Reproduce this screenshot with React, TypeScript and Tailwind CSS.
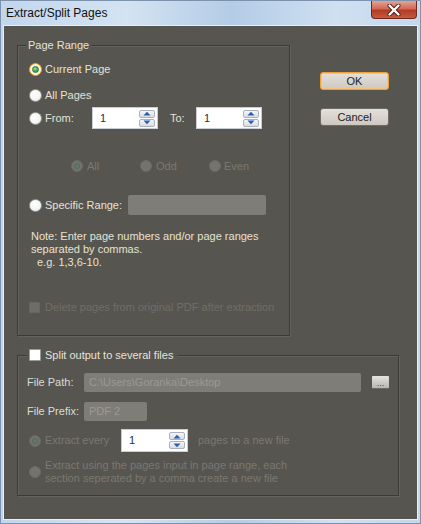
import React from "react";

const FONT = { fontFamily: '"Liberation Sans", Arial, sans-serif' };

type RState = "off" | "focusOn" | "disOn" | "disOff";

function Radio({ state }: { state: RState }) {
  if (state === "off") {
    return (
      <div className="w-[13px] h-[13px] rounded-full border border-[#9a9a96] bg-[radial-gradient(circle_at_40%_35%,#ffffff_0%,#f4f4f2_60%,#dcdcd8_100%)] shrink-0" />
    );
  }
  if (state === "focusOn") {
    return (
      <div className="w-[13px] h-[13px] rounded-full border-[1.5px] border-[#eb9b2a] bg-[#f7f3ea] flex items-center justify-center shrink-0">
        <div className="w-[7px] h-[7px] rounded-full border border-[#2f7a3c] bg-[radial-gradient(circle_at_40%_35%,#9be29a_0%,#45a854_55%,#2c7d39_100%)]" />
      </div>
    );
  }
  if (state === "disOn") {
    return (
      <div className="w-[12px] h-[12px] rounded-full bg-[#74726c] border border-[#6a6863] flex items-center justify-center shrink-0">
        <div className="w-[6px] h-[6px] rounded-full bg-[#5f7c62] border border-[#54695a]" />
      </div>
    );
  }
  return <div className="w-[12px] h-[12px] rounded-full bg-[#75736d] border border-[#6c6a65] shrink-0" />;
}

function Arrow({ up }: { up: boolean }) {
  return (
    <svg width="8" height="5" viewBox="0 0 8 5">
      {up ? (
        <polygon points="0.5,4.5 4,0.8 7.5,4.5" fill="#2d5fb0" />
      ) : (
        <polygon points="0.5,0.5 4,4.2 7.5,0.5" fill="#2d5fb0" />
      )}
    </svg>
  );
}

function Spinner({ w, h }: { w: string; h: string }) {
  return (
    <div className={`${w} ${h} bg-white border border-[#c9ced6] flex items-center justify-between pl-[7px] pr-[2px] shrink-0`}>
      <span className="text-[11px] text-[#1f2d4d] leading-none">1</span>
      <div className="flex flex-col gap-[1px]">
        <div className="w-[16px] h-[8px] rounded-[2px] border border-[#a9b1bd] bg-[linear-gradient(#f4f6f9,#d8dde5)] flex items-center justify-center">
          <Arrow up />
        </div>
        <div className="w-[16px] h-[8px] rounded-[2px] border border-[#a9b1bd] bg-[linear-gradient(#f4f6f9,#d8dde5)] flex items-center justify-center">
          <Arrow up={false} />
        </div>
      </div>
    </div>
  );
}

function Button({ label, focus }: { label: string; focus?: boolean }) {
  return (
    <div
      className={`w-[69px] h-[18px] rounded-[3px] flex items-center justify-center text-[11px] text-[#222] bg-[linear-gradient(#e4e1da,#cdc9c1)] border ${
        focus ? "border-[#f0a23a] shadow-[inset_0_0_0_1px_#f6c27a]" : "border-[#6f6c66]"
      }`}
    >
      {label}
    </div>
  );
}

export default function App() {
  return (
    <div className="w-[421px] h-[524px] flex flex-col border border-[#7d93ad] bg-[linear-gradient(90deg,#c2d6ec_0%,#d3e3f2_30%,#b4cce6_55%,#cfe0f1_80%,#c3d7ed_100%)]" style={FONT}>
      {/* Title bar */}
      <div className="h-[24px] flex items-start justify-between shrink-0">
        <span className="text-[12px] text-[#111] pl-[5px] pt-[5px] leading-[14px]">Extract/Split Pages</span>
        <div className="mr-[3px] w-[46px] h-[18px] rounded-b-[4px] border border-t-0 border-[#6e2a20] bg-[linear-gradient(#e6a294_0%,#d06a56_45%,#b23b25_55%,#c65a3e_100%)] flex items-center justify-center">
          <svg width="14" height="12" viewBox="0 0 14 12">
            <path d="M2.5 1.5 L11.5 10.5 M11.5 1.5 L2.5 10.5" stroke="#4a1a14" strokeWidth="4" strokeLinecap="round" />
            <path d="M2.5 1.5 L11.5 10.5 M11.5 1.5 L2.5 10.5" stroke="#ffffff" strokeWidth="2.4" strokeLinecap="round" />
          </svg>
        </div>
      </div>

      {/* Content */}
      <div className="mx-[2px] mb-[3px] flex-1 border border-[#e6eef7] bg-[#57554f] text-[11px] text-[#e3e3db]">
        <div className="flex flex-col pl-[13px] pt-[19px]">
          <div className="flex">
            {/* Page Range group */}
            <div className="relative w-[273px] h-[291px] border border-[#3c3b37] shadow-[inset_1px_1px_0_#64625d,1px_1px_0_#64625d] flex flex-col pl-[11px]">
              <span className="absolute -top-[8px] left-[8px] px-[2px] bg-[#57554f] leading-[14px]">Page Range</span>

              <div className="mt-[12px] h-[22px] flex items-center gap-[3px]">
                <Radio state="focusOn" />
                <span>Current Page</span>
              </div>
              <div className="mt-[4px] h-[22px] flex items-center gap-[3px]">
                <Radio state="off" />
                <span>All Pages</span>
              </div>
              <div className="mt-[1px] h-[22px] flex items-center">
                <Radio state="off" />
                <span className="ml-[3px] w-[47px]">From:</span>
                <Spinner w="w-[66px]" h="h-[22px]" />
                <span className="ml-[12px] w-[26px]">To:</span>
                <Spinner w="w-[66px]" h="h-[22px]" />
              </div>
              <div className="mt-[26px] h-[22px] flex items-center pl-[42px] text-[#7a7872]">
                <div className="w-[69px] flex items-center gap-[4px]">
                  <Radio state="disOn" />
                  <span>All</span>
                </div>
                <div className="w-[69px] flex items-center gap-[4px]">
                  <Radio state="disOff" />
                  <span>Odd</span>
                </div>
                <div className="flex items-center gap-[3px]">
                  <Radio state="disOff" />
                  <span>Even</span>
                </div>
              </div>
              <div className="mt-[17px] h-[22px] flex items-center">
                <Radio state="off" />
                <span className="ml-[3px] w-[83px]">Specific Range:</span>
                <div className="w-[138px] h-[20px] rounded-[2px] bg-[#7f7d78]" />
              </div>
              <div className="mt-[14px] pl-[2px] leading-[13px] text-[#e6e3d4]">
                <div>Note: Enter page numbers and/or page ranges</div>
                <div>separated by commas.</div>
                <div className="pl-[6px]">e.g. 1,3,6-10.</div>
              </div>
              <div className="mt-[27px] h-[22px] flex items-center gap-[5px] text-[#706e68]">
                <div className="w-[11px] h-[11px] rounded-[1px] bg-[#6f6d68] border border-[#68665f]" />
                <span>Delete pages from original PDF after extraction</span>
              </div>
            </div>

            {/* Buttons */}
            <div className="ml-[30px] mt-[27px] flex flex-col gap-[18px]">
              <Button label="OK" focus />
              <Button label="Cancel" />
            </div>
          </div>

          {/* Split group */}
          <div className="relative mt-[19px] w-[382px] h-[141px] border border-[#3c3b37] shadow-[inset_1px_1px_0_#64625d,1px_1px_0_#64625d] flex flex-col pl-[9px]">
            <div className="absolute -top-[8px] left-[9px] pl-[2px] pr-[4px] bg-[#57554f] flex items-center gap-[4px] leading-[14px]">
              <div className="w-[12px] h-[12px] rounded-[1px] bg-white border border-[#9a9a96]" />
              <span>Split output to several files</span>
            </div>

            <div className="mt-[16px] h-[20px] flex items-center">
              <span className="w-[57px] text-[#dcdcd4]">File Path:</span>
              <div className="w-[277px] h-[19px] rounded-[2px] bg-[#7f7d78] flex items-center pl-[5px] text-[#9b9993]">
                C:\Users\Goranka\Desktop
              </div>
              <div className="ml-[11px] w-[17px] h-[13px] rounded-[1px] bg-[linear-gradient(#e6e4e0,#b9b6b0)] border-b border-[#6e6c66] flex items-end justify-center text-[9px] leading-[9px] text-[#444]">
                ...
              </div>
            </div>
            <div className="mt-[10px] h-[19px] flex items-center">
              <span className="w-[57px] text-[#dcdcd4]">File Prefix:</span>
              <div className="w-[63px] h-[19px] rounded-[2px] bg-[#7f7d78] flex items-center pl-[5px] text-[#9b9993]">PDF 2</div>
            </div>
            <div className="mt-[8px] h-[23px] flex items-center pl-[2px] text-[#7a7872]">
              <Radio state="disOn" />
              <span className="ml-[4px] w-[76px]">Extract every</span>
              <Spinner w="w-[67px]" h="h-[23px]" />
              <span className="ml-[10px]">pages to a new file</span>
            </div>
            <div className="mt-[7px] flex items-center pl-[2px] text-[#7a7872]">
              <Radio state="disOff" />
              <div className="ml-[4px] leading-[13px]">
                <div>Extract using the pages input in page range, each</div>
                <div>section seperated by a comma create a new file</div>
              </div>
            </div>
          </div>
        </div>
      </div>
    </div>
  );
}
